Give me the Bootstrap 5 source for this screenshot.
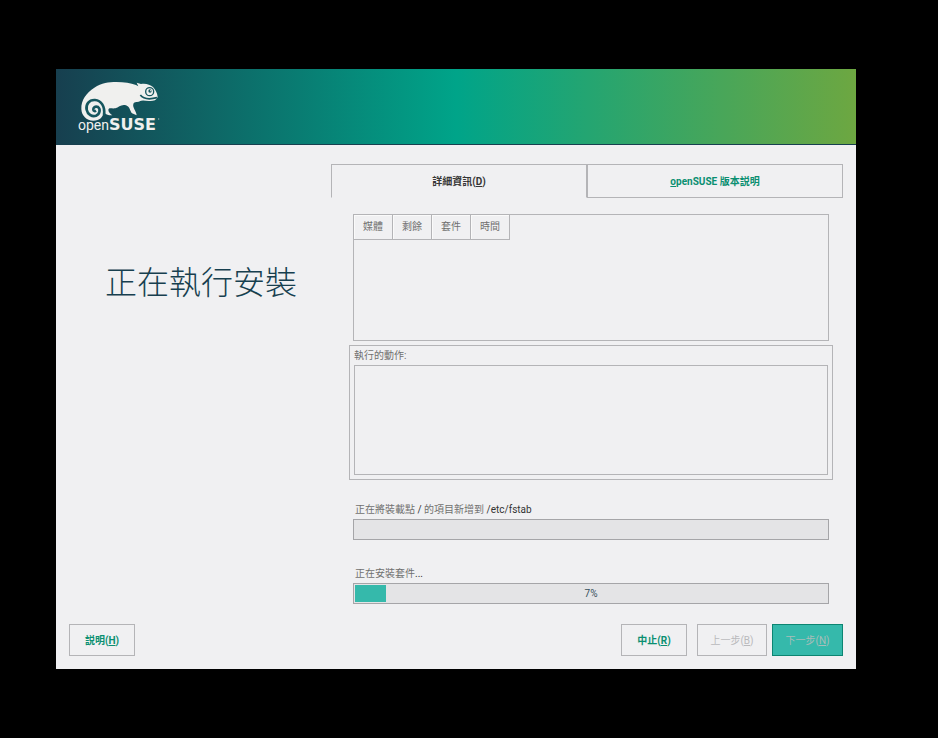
<!DOCTYPE html>
<html lang="zh-Hant">
<head>
<meta charset="utf-8">
<meta name="viewport" content="width=device-width, initial-scale=1">
<title>openSUSE</title>
<link rel="stylesheet" href="https://cdn.jsdelivr.net/npm/bootstrap@5.3.0/dist/css/bootstrap.min.css">
<style>
  :root { --line: #b4b4b7; --surface: #f0f0f2; --green: #0a8f71; --ink: #173f4f; }
  body { min-height: 100vh; padding: 69px 82px 69px 56px; background: #000; color: #444;
    font: 10px/14px Roboto, "Noto Sans CJK TC", sans-serif; }
  .installer { background: var(--surface); }
  .banner { height: 76px; padding: 11px 22px; border-bottom: 1px solid var(--ink);
    background: linear-gradient(90deg, #173f4f 0%, #00a489 50%, #6da741 100%); }
  .side { width: 275px; flex: none; }
  .side h1 { margin: 118px 0 0; padding-left: 49px; font-size: 32px; line-height: 40px; font-weight: 300; color: var(--ink); }
  .content-pane { padding: 19px 13px 0 0; min-width: 0; }
  .tabs .nav-link { height: 34px; padding: 2px 0 0; border: 1px solid var(--line); border-radius: 0; font-weight: 700; color: var(--green); background: none; }
  .tabs .nav-link.active { border-bottom-color: transparent; color: #363636; background: none; }
  .details { padding: 16px 14px 0 22px; }
  .pane { border: 1px solid var(--line); }
  .packages { min-height: 127px; }
  .packages table { border-collapse: separate; border-spacing: 0; }
  .packages th { width: 39px; min-width: 39px; height: 25px; padding: 0; text-align: center; font-weight: 400; color: #707070;
    border: solid var(--line); border-width: 0 1px 1px 0; box-shadow: inset 1px 1px #fafafa; }
  .actions { margin: 4px -4px 0; padding: 2px 4px 4px; }
  .caption { color: #707070; line-height: 16px; }
  .caption b { font-weight: 400; color: #333; }
  .log { height: 110px; margin-top: 1px; resize: none; background: none; border-radius: 0; outline: 0; }
  .meter { margin-top: 22px; }
  .meter + .meter { margin-top: 26px; }
  .meter .caption { padding-left: 2px; }
  .meter .progress { height: 21px; margin-top: 1px; padding: 1px; border: 1px solid #a5a5a8; border-radius: 0; background: #e4e4e6; font-size: 10px; }
  .meter .progress-bar { background: #35b9ab; }
  .meter .value { color: #36505c; }
  .controls { padding: 20px 13px 13px; }
  .controls .btn { height: 32px; width: 66px; padding: 2px 0 0; font-size: 10px; line-height: 14px; font-weight: 700;
    border-radius: 0; border: 1px solid var(--line); color: var(--green); }
  .controls .btn:disabled { width: 70px; margin-left: 10px; opacity: 1; font-weight: 400; color: #b9b9bc; border-color: var(--line); }
  .controls .btn.next:disabled { width: 71px; margin-left: 5px; background: #35b9ab; border-color: #0c8572; color: #a9bdb9; }
</style>
<script src="https://cdn.jsdelivr.net/npm/bootstrap@5.3.0/dist/js/bootstrap.bundle.min.js"></script>
</head>
<body class="d-flex flex-column">
<main class="installer flex-grow-1 d-flex flex-column">
  <header class="banner">
    <svg class="d-block" width="84" height="54" viewBox="66 45 252 162" role="img" aria-label="openSUSE">
      <path fill="#f0f0ee" d="M76 132C75 105 91 84 115 68C137 54 158 51 181 51C205 51 224 55 240 60L247 64L242 53L255 57C267 54 283 58 291 66C299 75 304 85 305 96C302 106 291 109 279 108C267 107 258 104 251 109C246 113 235 109 232 117C229 129 241 137 242 151L228 145C222 139 222 125 210 121C195 117 189 127 178 130C166 132 159 126 157 135C158 143 163 146 169 151C155 151 147 147 143 140C142 155 131 167 112 167C91 167 77 152 76 132Z"/>
      <path fill="none" stroke="#16565e" stroke-width="8" d="M144 150C148 124 135 106 117 105C98 104 89 119 92 134C95 149 109 156 120 152C132 147 134 132 126 126C118 122 111 128 112 134C113 139 117 139 120 137"/>
      <circle cx="281" cy="80" r="12" fill="none" stroke="#16565e" stroke-width="4"/>
      <circle cx="282" cy="78" r="5" fill="#16565e"/><circle cx="284" cy="77" r="2" fill="#f0f0ee"/>
      <path fill="none" stroke="#16565e" stroke-width="5" d="M253 90C262 102 280 104 303 98"/>
      <g fill="#f0f0ee">
        <text x="66" y="195" font-family="Roboto, sans-serif" font-size="42">open</text>
        <text x="159" y="195" font-family="'DejaVu Sans', sans-serif" font-weight="700" font-size="48">SUSE</text>
        <circle cx="308" cy="162" r="2" opacity=".6"/>
      </g>
    </svg>
  </header>
  <div class="d-flex flex-grow-1">
    <aside class="side"><h1>正在執行安裝</h1></aside>
    <section class="content-pane flex-grow-1 d-flex flex-column">
      <nav class="nav nav-justified tabs" role="tablist">
        <button type="button" class="nav-link active" role="tab" aria-selected="true">詳細資訊(<u>D</u>)</button>
        <button type="button" class="nav-link" role="tab" aria-selected="false"><u>o</u>penSUSE 版本説明</button>
      </nav>
      <div class="details flex-grow-1 d-flex flex-column">
        <div class="pane packages flex-grow-1">
          <table><thead><tr><th scope="col">媒體</th><th scope="col">剩餘</th><th scope="col">套件</th><th scope="col">時間</th></tr></thead></table>
        </div>
        <div class="pane actions">
          <label class="caption d-block" for="log">執行的動作:</label>
          <textarea id="log" class="pane log d-block w-100" readonly></textarea>
        </div>
        <div class="meter">
          <div class="caption" id="step">正在將裝載點 <b>/</b> 的項目新增到 <b>/etc/fstab</b></div>
          <div class="progress" role="progressbar" aria-labelledby="step" aria-valuenow="0" aria-valuemin="0" aria-valuemax="100"></div>
        </div>
        <div class="meter">
          <div class="caption" id="total">正在安裝套件<b>...</b></div>
          <div class="progress position-relative" role="progressbar" aria-labelledby="total" aria-valuenow="7" aria-valuemin="0" aria-valuemax="100">
            <div class="progress-bar" style="width: 6.6%"></div>
            <span class="value position-absolute top-50 start-50 translate-middle">7%</span>
          </div>
        </div>
      </div>
    </section>
  </div>
  <footer class="controls d-flex">
    <button type="button" class="btn me-auto">説明(<u>H</u>)</button>
    <button type="button" class="btn">中止(<u>R</u>)</button>
    <button type="button" class="btn" disabled>上一步(<u>B</u>)</button>
    <button type="button" class="btn next" disabled>下一步(<u>N</u>)</button>
  </footer>
</main>
</body>
</html>
